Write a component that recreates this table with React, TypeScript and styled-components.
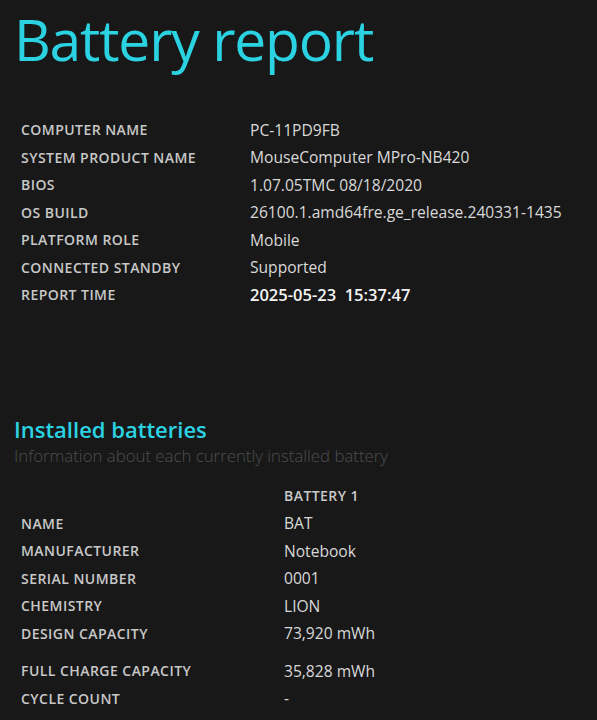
import React from "react";
import styled, { createGlobalStyle } from "styled-components";

const Global = createGlobalStyle`
  html, body { margin: 0; padding: 0; background: #181818; }
  body { font-family: "Open Sans", "Noto Sans", sans-serif; color: #dcdcdc; }
`;

const Page = styled.div`
  background: #181818;
  min-height: 720px;
  overflow: hidden;
`;

const Title = styled.h1`
  margin: 0;
  padding: 0 0 0 14px;
  font-family: "Open Sans", sans-serif;
  font-weight: 400;
  font-size: 57px;
  line-height: normal;
  color: #2bd2e2;
  letter-spacing: -1.2px;
`;

const Table = styled.table<{ $top: number; $left: number }>`
  border-collapse: collapse;
  margin: ${(p) => p.$top}px 0 0 ${(p) => p.$left}px;
`;

const Row = styled.tr<{ $gap?: number }>`
  td { padding-top: ${(p) => p.$gap ?? 0}px; }
`;

const Label = styled.td<{ $w: number }>`
  width: ${(p) => p.$w}px;
  height: 27.5px;
  padding: 0;
  font-family: "Open Sans", sans-serif;
  font-weight: 600;
  font-size: 14px;
  letter-spacing: 0.45px;
  color: #c8c8c8;
  text-transform: uppercase;
  vertical-align: middle;
`;

const Value = styled.td<{ $strong?: boolean }>`
  padding: 0;
  font-family: "Open Sans", sans-serif;
  font-size: ${(p) => (p.$strong ? 16.5 : 15.6)}px;
  font-weight: ${(p) => (p.$strong ? 600 : 400)};
  color: ${(p) => (p.$strong ? "#f4f4f4" : "#d8d8d8")};
  white-space: pre;
  vertical-align: middle;
`;

const HeadCell = styled.td`
  padding: 0;
  height: 28px;
  font-family: "Open Sans", sans-serif;
  font-weight: 600;
  font-size: 14px;
  letter-spacing: 0.45px;
  color: #c8c8c8;
  vertical-align: middle;
`;

const Section = styled.section`
  margin: 106px 0 0 14px;
`;

const H2 = styled.h2`
  margin: 0;
  font-family: "Open Sans", sans-serif;
  font-weight: 600;
  font-size: 22px;
  line-height: 28px;
  color: #2bd2e2;
`;

const Sub = styled.div`
  margin-top: 2px;
  font-family: "Open Sans", sans-serif;
  font-weight: 300;
  font-size: 16.8px;
  line-height: 22px;
  color: #4e4e4e;
`;

const info: [string, string, boolean?][] = [
  ["Computer name", "PC-11PD9FB"],
  ["System product name", "MouseComputer MPro-NB420"],
  ["BIOS", "1.07.05TMC 08/18/2020"],
  ["OS build", "26100.1.amd64fre.ge_release.240331-1435"],
  ["Platform role", "Mobile"],
  ["Connected standby", "Supported"],
  ["Report time", "2025-05-23  15:37:47", true],
];

const batt: [string, string, number?][] = [
  ["Name", "BAT"],
  ["Manufacturer", "Notebook"],
  ["Serial number", "0001"],
  ["Chemistry", "LION"],
  ["Design capacity", "73,920 mWh"],
  ["Full charge capacity", "35,828 mWh", 10],
  ["Cycle count", "-"],
];

export default function App() {
  return (
    <Page>
      <Global />
      <Title>Battery report</Title>
      <Table $top={38} $left={21}>
        <tbody>
          {info.map(([k, v, s]) => (
            <Row key={k}>
              <Label $w={229}>{k}</Label>
              <Value $strong={s}>{v}</Value>
            </Row>
          ))}
        </tbody>
      </Table>
      <Section>
        <H2>Installed batteries</H2>
        <Sub>Information about each currently installed battery</Sub>
      </Section>
      <Table $top={15} $left={21}>
        <tbody>
          <Row>
            <Label $w={263} />
            <HeadCell>BATTERY 1</HeadCell>
          </Row>
          {batt.map(([k, v, g]) => (
            <Row key={k} $gap={g}>
              <Label $w={263}>{k}</Label>
              <Value>{v}</Value>
            </Row>
          ))}
        </tbody>
      </Table>
    </Page>
  );
}
